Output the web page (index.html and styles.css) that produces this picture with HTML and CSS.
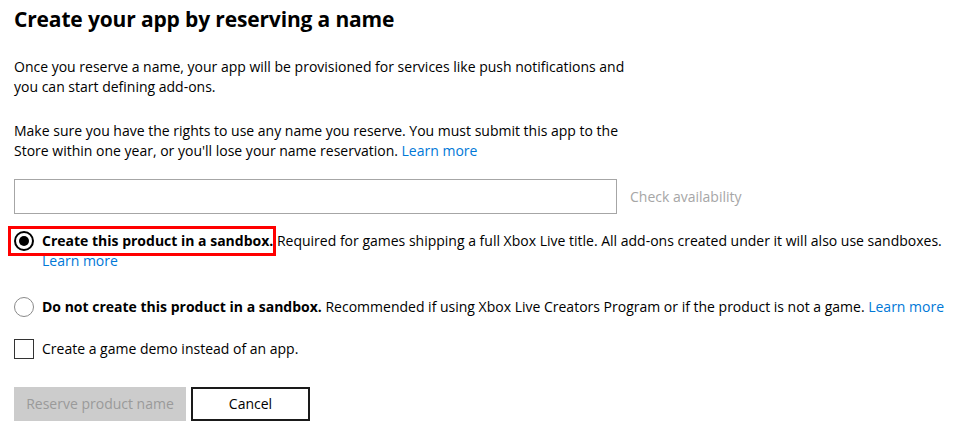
FILE: index.html
```html
<!DOCTYPE html>
<html lang="en">
<head>
<meta charset="utf-8">
<title>Create your app by reserving a name</title>
<link rel="stylesheet" href="styles.css">
</head>
<body>
<main class="page">
  <h1 class="title">Create your app by reserving a name</h1>
  <p class="intro">Once you reserve a name, your app will be provisioned for services like push notifications and you can start defining add-ons.</p>
  <p class="intro intro-last">Make sure you have the rights to use any name you reserve. You must submit this app to the Store within one year, or you'll lose your name reservation. <a class="link" href="#">Learn more</a></p>

  <div class="name-row">
    <input class="name-input" type="text" aria-label="App name">
    <span class="check">Check availability</span>
  </div>

  <div class="options">
    <div class="option option-first">
      <span class="radio radio-on"></span>
      <div class="option-text"><strong>Create this product in a sandbox.</strong> Required for games shipping a full Xbox Live title. All add-ons created under it will also use sandboxes. <a class="link" href="#">Learn more</a></div>
      <span class="highlight"></span>
    </div>
    <div class="option option-second">
      <span class="radio"></span>
      <div class="option-text"><strong>Do not create this product in a sandbox.</strong> Recommended if using Xbox Live Creators Program or if the product is not a game. <a class="link" href="#">Learn more</a></div>
    </div>
    <div class="option option-check">
      <span class="checkbox"></span>
      <div class="option-text">Create a game demo instead of an app.</div>
    </div>
  </div>

  <div class="actions">
    <button class="btn btn-disabled" type="button">Reserve product name</button>
    <button class="btn btn-cancel" type="button">Cancel</button>
  </div>
</main>
</body>
</html>
```
FILE: styles.css
```css
html, body {
  margin: 0;
  padding: 0;
  background: #ffffff;
}

body {
  font-family: "Open Sans", "Noto Sans", "DejaVu Sans", sans-serif;
  font-size: 14px;
  line-height: 20px;
  color: #000000;
}

.page {
  width: 942px;
  padding: 0 14px;
}

.title {
  margin: 4px 0 0;
  font-size: 21px;
  line-height: 30px;
  font-weight: 700;
  letter-spacing: -0.15px;
}

.intro {
  width: 630px;
  margin: 23px 0 0;
}

.intro + .intro {
  margin-top: 24px;
}

.link {
  color: #0078d7;
  text-decoration: none;
}

.name-row {
  display: flex;
  align-items: center;
  gap: 13px;
  margin-top: 18px;
}

.name-input {
  box-sizing: border-box;
  width: 603px;
  height: 35px;
  margin: 0;
  border: 1px solid #a6a6a6;
  background: #fff;
  font: inherit;
}

.check {
  color: #a6a6a6;
}

.options {
  margin-top: 17px;
}

.option {
  position: relative;
  display: flex;
  align-items: flex-start;
  gap: 8px;
}

.option-second {
  margin-top: 26px;
}

.option-check {
  margin-top: 22px;
}

.radio {
  box-sizing: border-box;
  flex: none;
  width: 20px;
  height: 20px;
  border: 1px solid #8a8a8a;
  border-radius: 50%;
  display: flex;
  align-items: center;
  justify-content: center;
}

.radio-on {
  border: 2px solid #000;
}

.radio-on::after {
  content: "";
  width: 10px;
  height: 10px;
  border-radius: 50%;
  background: #000;
}

.checkbox {
  box-sizing: border-box;
  flex: none;
  width: 20px;
  height: 20px;
  border: 1px solid #333;
}

.option-text {
  flex: 1;
}

.option-text strong {
  font-weight: 700;
}

.highlight {
  position: absolute;
  left: -6px;
  top: -5px;
  width: 268px;
  height: 30px;
  box-sizing: border-box;
  border: 3px solid #ff0000;
  pointer-events: none;
}

.actions {
  display: flex;
  gap: 5px;
  margin-top: 28px;
}

.btn {
  box-sizing: border-box;
  height: 34px;
  margin: 0;
  font: inherit;
  font-size: 14px;
  padding: 0;
}

.btn-disabled {
  width: 172px;
  border: none;
  background: #cccccc;
  color: #9a9a9a;
}

.btn-cancel {
  width: 119px;
  border: 2px solid #1a1a1a;
  background: #fff;
  color: #000;
}
```
